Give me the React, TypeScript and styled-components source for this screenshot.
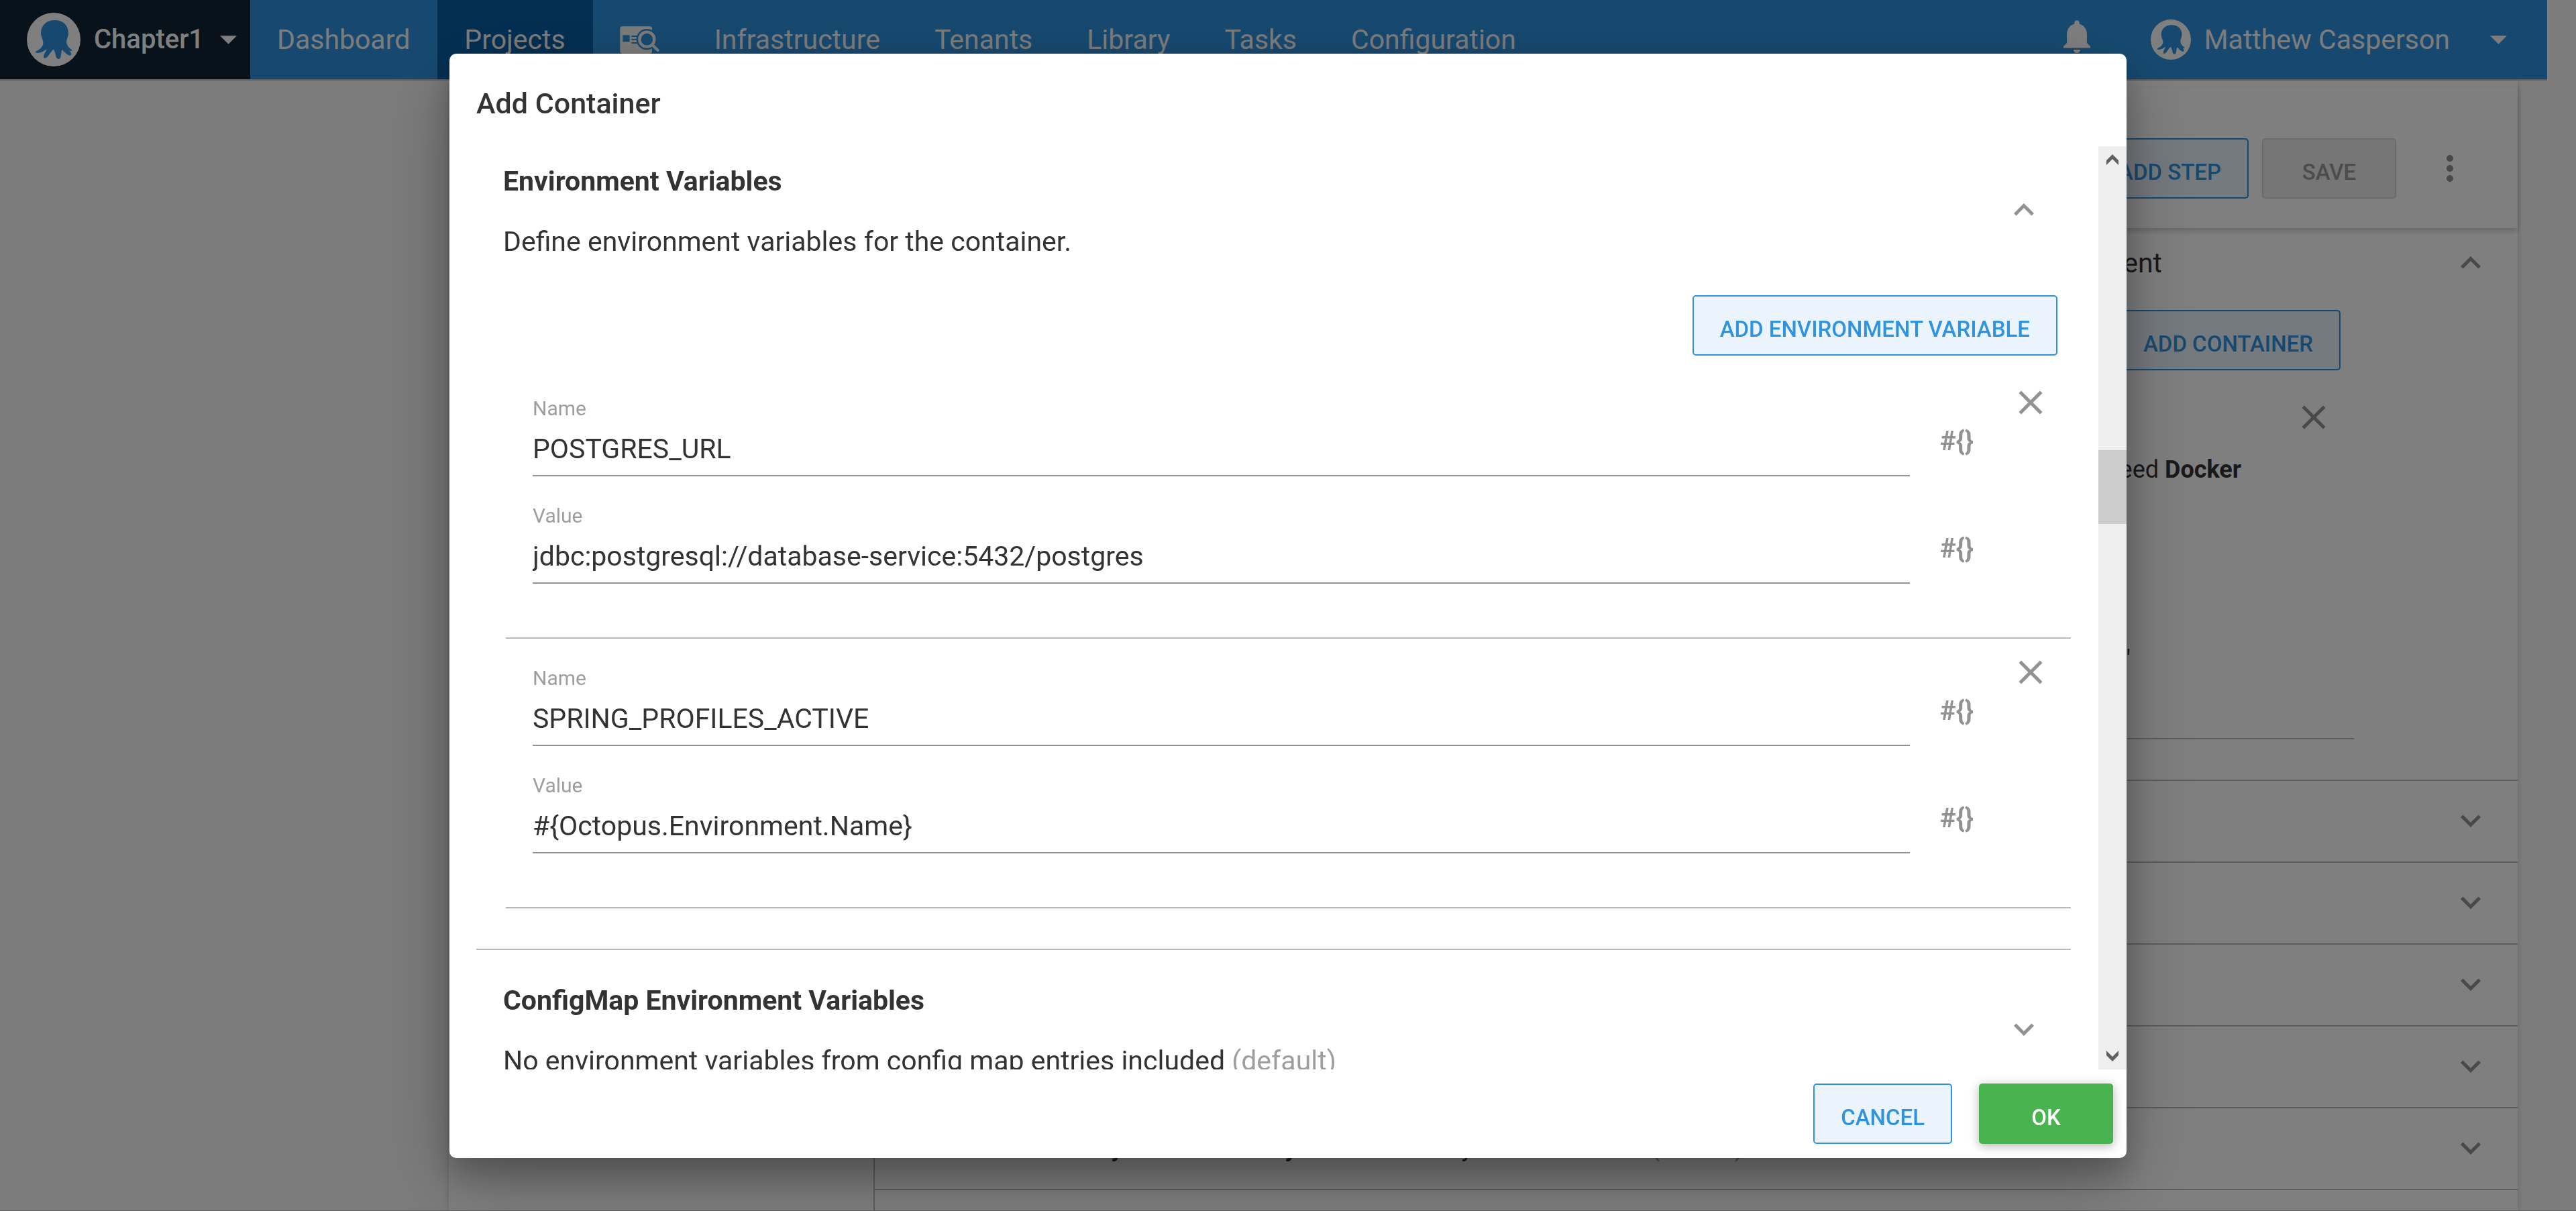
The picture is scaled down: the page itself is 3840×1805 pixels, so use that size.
import React, { useState } from "react";
import styled, { createGlobalStyle } from "styled-components";

const color = {
  brand: "#2f93e0",
  brandDark: "#085fa6",
  brandTint: "#ebf4fc",
  navy: "#0e2434",
  text: "#333333",
  muted: "#9e9e9e",
  icon: "#929292",
  line: "#bababa",
  page: "#f9f9f9",
  green: "#49b350",
};

const GlobalStyle = createGlobalStyle`
  *, *::before, *::after { box-sizing: border-box; }
  body {
    margin: 0;
    background: ${color.page};
    color: ${color.text};
    font-family: Roboto, "Liberation Sans", sans-serif;
    font-size: 41px;
    line-height: 60px;
  }
  button, input { font: inherit; color: inherit; }
  h1, h2, p { margin: 0; }
`;

const Page = styled.div`
  height: 100vh;
  overflow: hidden;
  display: flex;
  flex-direction: column;
  border-bottom: 1px solid ${color.line};
`;

/* ---------- navigation ---------- */

const NavBar = styled.header`
  flex: none;
  display: flex;
  align-items: stretch;
  height: 120px;
  margin-right: 43px;
  background: ${color.brand};
  border-bottom: 2px solid ${color.line};
  color: #f8f8f8;
`;

const SpaceButton = styled.button`
  display: flex;
  align-items: center;
  padding: 0 20px 0 40px;
  border: 0;
  background: ${color.navy};
  color: #ffffff;
  font-size: 40px;
  font-weight: 500;
`;

const SpaceName = styled.span`
  margin: 0 24px 0 20px;
`;

const NavLinks = styled.nav`
  display: flex;
`;

const NavLink = styled.a<{ $active?: boolean }>`
  display: flex;
  align-items: center;
  padding: 0 41px 0 40px;
  color: inherit;
  text-decoration: none;
  background: ${(p) => (p.$active ? color.brandDark : "transparent")};
`;

const NavEnd = styled.div`
  display: flex;
  align-items: center;
  margin-left: auto;
  padding-right: 60px;
  gap: 80px;
`;

const BareButton = styled.button`
  display: flex;
  align-items: center;
  justify-content: center;
  flex: none;
  padding: 0;
  border: 0;
  background: none;
`;

const BellButton = styled(BareButton)`
  width: 60px;
  padding-bottom: 10px;
`;

const UserName = styled.span`
  margin: 0 60px 0 20px;
`;

/* ---------- page behind the dialog ---------- */

const Paper = styled.main`
  flex: 1;
  min-height: 0;
  display: grid;
  grid-template-columns: 635px 1fr;
  margin: 0 87px 0 669px;
  background: #ffffff;
  box-shadow: 0 2px 8px rgba(0, 0, 0, 0.2);
`;

const StepList = styled.aside`
  border-right: 2px solid ${color.line};
  margin-top: 220px;
`;

const StepEditor = styled.section`
  display: flex;
  flex-direction: column;
`;

const Toolbar = styled.div`
  display: flex;
  align-items: center;
  justify-content: flex-end;
  gap: 20px;
  height: 210px;
  margin-top: 10px;
  padding: 32px 71px 0 0;
  box-shadow: 0 4px 8px rgba(0, 0, 0, 0.2);
`;

const MoreButton = styled(BareButton)`
  width: 60px;
  height: 60px;
  margin-left: 30px;
  color: ${color.icon};
`;

const Expander = styled.div`
  display: flex;
  flex-direction: column;
  padding: 22px 40px 60px;
  border-bottom: 2px solid ${color.line};
`;

const ExpanderHead = styled.div`
  display: flex;
  align-items: center;
  justify-content: flex-end;
  gap: 430px;
`;

const ContainerList = styled.div`
  display: flex;
  flex-direction: column;
  align-items: flex-end;
  gap: 40px;
  height: 680px;
  margin: 0 204px 0 0;
  padding: 40px 20px 0 0;
  border-bottom: 2px solid ${color.line};
`;

const ContainerCard = styled.div`
  display: flex;
  flex-direction: column;
  align-items: flex-end;
  padding-right: 10px;
  font-size: 36px;
  line-height: 40px;
`;

const ImageLine = styled.p`
  padding: 28px 138px 0 0;
`;

const LabelLine = styled.p`
  padding: 243px 303px 0 0;
`;

const CollapsedRow = styled.div`
  flex: none;
  display: flex;
  align-items: center;
  justify-content: space-between;
  height: 122px;
  padding: 0 40px 2px 352px;
  border-bottom: 2px solid ${color.line};
  font-size: 36px;
`;

const Muted = styled.span`
  color: ${color.muted};
`;

const Choice = styled.span`
  display: flex;
  gap: 10px;
`;

/* ---------- buttons ---------- */

const Button = styled.button<{ $kind?: "primary" }>`
  flex: none;
  height: 90px;
  min-width: 200px;
  padding: 11px 39px 0;
  border: 2px solid ${(p) => (p.$kind ? color.green : color.brand)};
  border-radius: 5px;
  background: ${(p) => (p.$kind ? color.green : color.brandTint)};
  color: ${(p) => (p.$kind ? "#ffffff" : color.brand)};
  box-shadow: ${(p) => (p.$kind ? "0 3px 15px rgba(0, 0, 0, 0.3)" : "none")};
  font-size: 33px;
  font-weight: 500;
  text-transform: uppercase;

  &:disabled {
    border-color: #d6d6d6;
    background: #ececec;
    color: #989898;
  }
`;

const IconButton = styled(BareButton)`
  width: 60px;
  height: 60px;
  color: ${color.icon};
`;

/* ---------- dialog ---------- */

const Backdrop = styled.div`
  position: fixed;
  inset: 0;
  display: flex;
  justify-content: center;
  padding: 80px 80px 79px;
  background: rgba(0, 0, 0, 0.5);
`;

const Dialog = styled.div`
  display: flex;
  flex-direction: column;
  width: 100%;
  max-width: 2500px;
  border-radius: 10px;
  background: #ffffff;
  box-shadow: 0 35px 112px rgba(0, 0, 0, 0.25), 0 25px 45px rgba(0, 0, 0, 0.22);
`;

const DialogTitle = styled.h1`
  padding: 44px 40px 34px;
  font-size: 43px;
  font-weight: 500;
`;

const DialogBody = styled.div`
  flex: 1;
  min-height: 0;
  display: flex;
  overflow: hidden;
`;

const Scroller = styled.div`
  flex: 1;
  overflow: hidden;
  padding: 0 41px 0 40px;
`;

const Section = styled.section`
  padding-top: 45px;
  border-top: 2px solid ${color.line};

  &:first-child {
    padding-top: 22px;
    border-top: 0;
  }
`;

const SectionHead = styled.div`
  display: flex;
  align-items: center;
  justify-content: space-between;
  padding: 0 40px;

  > button {
    padding-bottom: 5px;
  }
`;

const SectionTitle = styled.h2`
  margin-bottom: 30px;
  font-size: 41px;
  font-weight: 700;
`;

const AddRow = styled.div`
  display: flex;
  justify-content: flex-end;
  padding: 50px 20px 20px;
`;

const VariableList = styled.ul`
  margin: 0;
  padding: 0 0 60px 44px;
  list-style: none;
`;

const Variable = styled.li`
  display: flex;
  gap: 55px;
  padding: 0 30px 0 40px;
  border-bottom: 2px solid ${color.line};
`;

const Fields = styled.div`
  flex: 1;
  padding: 40px 0;
`;

const FieldRow = styled.div`
  display: flex;
  align-items: flex-end;
  gap: 45px;
  margin-bottom: 40px;
`;

const Field = styled.label`
  flex: 1;
  display: flex;
  flex-direction: column;
  color: ${color.muted};
  font-size: 30px;
  line-height: 38px;
`;

const TextInput = styled.input`
  height: 82px;
  padding: 2px 0 0;
  border: 0;
  border-bottom: 2px solid ${color.icon};
  outline: 0;
  background: none;
  color: ${color.text};
  font-size: 41px;
`;

const InsertButton = styled(BareButton)`
  width: 50px;
  margin-bottom: 32px;
  color: ${color.icon};
  font-size: 40px;
  font-weight: 700;
  line-height: 40px;
  white-space: nowrap;
`;

const RemoveButton = styled(IconButton)`
  margin-top: 20px;
`;

const Scrollbar = styled.div`
  flex: none;
  display: flex;
  flex-direction: column;
  width: 42px;
  background: #efefef;
`;

const ScrollArrow = styled(BareButton)`
  height: 40px;
  color: #606060;
`;

const ScrollGap = styled.div<{ $share: number }>`
  flex: ${(p) => p.$share};
`;

const ScrollThumb = styled.div`
  height: 110px;
  background: #cccccc;
`;

const DialogActions = styled.div`
  display: flex;
  justify-content: flex-end;
  gap: 40px;
  padding: 21px 20px;
`;

/* ---------- icons ---------- */

const Octopus = ({ size }: { size: number }) => (
  <svg width={size} height={size} viewBox="30 27 240 240" aria-hidden="true">
    <circle cx="150" cy="147" r="120" fill="#ffffff" />
    <path
      fill={color.brand}
      d="M155 60C193 60 216 84 216 117C216 135 205 147 208 163C211 178 224 190 232 193C234 199 226 199 219 196C227 203 231 212 227 217C217 222 200 206 188 192C183 200 184 224 178 232C172 236 162 233 160 222C158 208 155 199 149 191C139 196 128 222 116 229C104 234 103 222 108 212C112 204 118 196 120 190C108 197 92 208 77 207C68 206 66 203 72 199C88 191 103 178 103 162C103 146 93 136 93 117C93 84 117 60 155 60Z"
    />
  </svg>
);

const Caret = () => (
  <svg width="25" height="13" viewBox="7 10 10 5" fill="currentColor" aria-hidden="true">
    <path d="M7 10l5 5 5-5z" />
  </svg>
);

const SearchCard = () => (
  <svg width="60" height="41" viewBox="69 56 180 123" aria-hidden="true">
    <rect x="70" y="57" width="143" height="121" rx="10" fill="#f8f8f8" />
    <rect x="82" y="96" width="31" height="30" fill={color.brand} />
    <path d="M121 101h30M121 115h24M121 131h30" stroke={color.brand} strokeWidth="6" />
    <circle cx="190" cy="115" r="47" fill={color.brand} />
    <path d="M212 138l29 29" stroke={color.brand} strokeWidth="24" />
    <circle cx="190" cy="115" r="33" fill="none" stroke="#f8f8f8" strokeWidth="13" />
    <path d="M213 139l26 25" stroke="#f8f8f8" strokeWidth="13" strokeLinecap="round" />
  </svg>
);

const Bell = () => (
  <svg width="60" height="60" viewBox="0 0 24 24" fill="#ffffff" aria-hidden="true">
    <path d="M12 22c1.1 0 2-.9 2-2h-4c0 1.1.89 2 2 2zm6-6v-5c0-3.07-1.64-5.64-4.5-6.32V4c0-.83-.67-1.5-1.5-1.5s-1.5.67-1.5 1.5v.68C7.63 5.36 6 7.92 6 11v5l-2 2v1h16v-1l-2-2z" />
  </svg>
);

const paths = {
  up: "M12 8l-6 6 1.41 1.41L12 10.83l4.59 4.58L18 14z",
  down: "M16.59 8.59L12 13.17 7.41 8.59 6 10l6 6 6-6z",
  close:
    "M19 6.41L17.59 5 12 10.59 6.41 5 5 6.41 10.59 12 5 17.59 6.41 19 12 13.41 17.59 19 19 17.59 13.41 12z",
  more: "M12 8c1.1 0 2-.9 2-2s-.9-2-2-2-2 .9-2 2 .9 2 2 2zm0 2c-1.1 0-2 .9-2 2s.9 2 2 2 2-.9 2-2-.9-2-2-2zm0 6c-1.1 0-2 .9-2 2s.9 2 2 2 2-.9 2-2-.9-2-2-2z",
};

const Icon = ({ name }: { name: keyof typeof paths }) => (
  <svg width="60" height="60" viewBox="0 0 24 24" fill="currentColor" aria-hidden="true">
    <path d={paths[name]} />
  </svg>
);

const ArrowUp = () => (
  <svg width="18" height="16" viewBox="0 0 18 16" fill="currentColor" aria-hidden="true">
    <path d="M9 0l9 9v7l-9-9-9 9V9z" />
  </svg>
);

const ArrowDown = () => (
  <svg width="18" height="16" viewBox="0 0 18 16" fill="currentColor" aria-hidden="true">
    <path d="M9 16l9-9V0L9 9 0 0v7z" />
  </svg>
);

/* ---------- data ---------- */

const initialVariables = [
  { name: "POSTGRES_URL", value: "jdbc:postgresql://database-service:5432/postgres" },
  { name: "SPRING_PROFILES_ACTIVE", value: "#{Octopus.Environment.Name}" },
];

const collapsedSections = ["Volumes", "ConfigMap", "Secret", "Service"];

export default function App() {
  const [variables, setVariables] = useState(initialVariables);

  const update = (index: number, key: "name" | "value", text: string) =>
    setVariables((all) => all.map((v, i) => (i === index ? { ...v, [key]: text } : v)));

  return (
    <>
      <GlobalStyle />
      <Page>
        <NavBar>
          <SpaceButton>
            <Octopus size={80} />
            <SpaceName>Chapter1</SpaceName>
            <Caret />
          </SpaceButton>
          <NavLinks>
            <NavLink href="#dashboard">Dashboard</NavLink>
            <NavLink href="#projects" $active>
              Projects
            </NavLink>
            <NavLink href="#search" aria-label="Search projects">
              <SearchCard />
            </NavLink>
            <NavLink href="#infrastructure">Infrastructure</NavLink>
            <NavLink href="#tenants">Tenants</NavLink>
            <NavLink href="#library">Library</NavLink>
            <NavLink href="#tasks">Tasks</NavLink>
            <NavLink href="#configuration">Configuration</NavLink>
          </NavLinks>
          <NavEnd>
            <BellButton aria-label="Notifications">
              <Bell />
            </BellButton>
            <BareButton>
              <Octopus size={60} />
              <UserName>Matthew Casperson</UserName>
              <Caret />
            </BareButton>
          </NavEnd>
        </NavBar>

        <Paper>
          <StepList />
          <StepEditor>
            <Toolbar>
              <Button>Add step</Button>
              <Button disabled>Save</Button>
              <MoreButton aria-label="More actions">
                <Icon name="more" />
              </MoreButton>
            </Toolbar>
            <Expander>
              <ExpanderHead>
                <span>Deployment</span>
                <IconButton aria-label="Collapse">
                  <Icon name="up" />
                </IconButton>
              </ExpanderHead>
              <ContainerList>
                <Button>Add container</Button>
                <ContainerCard>
                  <IconButton aria-label="Remove container">
                    <Icon name="close" />
                  </IconButton>
                  <ImageLine>
                    from feed <b>Docker</b>
                  </ImageLine>
                  <LabelLine>"web"</LabelLine>
                </ContainerCard>
              </ContainerList>
            </Expander>
            {collapsedSections.map((title) => (
              <CollapsedRow key={title}>
                <span>{title}</span>
                <IconButton aria-label={"Expand " + title}>
                  <Icon name="down" />
                </IconButton>
              </CollapsedRow>
            ))}
            <CollapsedRow>
              <Choice>
                <b>y / Node Security</b>
                <span>No host identity values were set</span>
                <Muted>(default)</Muted>
              </Choice>
              <IconButton aria-label="Expand Node Security">
                <Icon name="down" />
              </IconButton>
            </CollapsedRow>
          </StepEditor>
        </Paper>
      </Page>

      <Backdrop>
        <Dialog role="dialog" aria-modal="true" aria-labelledby="dialog-title">
          <DialogTitle id="dialog-title">Add Container</DialogTitle>
          <DialogBody>
            <Scroller>
              <Section>
                <SectionHead>
                  <div>
                    <SectionTitle>Environment Variables</SectionTitle>
                    <p>Define environment variables for the container.</p>
                  </div>
                  <IconButton aria-label="Collapse Environment Variables">
                    <Icon name="up" />
                  </IconButton>
                </SectionHead>
                <AddRow>
                  <Button>Add environment variable</Button>
                </AddRow>
                <VariableList>
                  {variables.map((v, i) => (
                    <Variable key={i}>
                      <Fields>
                        <FieldRow>
                          <Field>
                            Name
                            <TextInput
                              value={v.name}
                              onChange={(e) => update(i, "name", e.target.value)}
                            />
                          </Field>
                          <InsertButton aria-label="Insert variable">{"#{}"}</InsertButton>
                        </FieldRow>
                        <FieldRow>
                          <Field>
                            Value
                            <TextInput
                              value={v.value}
                              onChange={(e) => update(i, "value", e.target.value)}
                            />
                          </Field>
                          <InsertButton aria-label="Insert variable">{"#{}"}</InsertButton>
                        </FieldRow>
                      </Fields>
                      <RemoveButton aria-label={"Remove " + v.name}>
                        <Icon name="close" />
                      </RemoveButton>
                    </Variable>
                  ))}
                </VariableList>
              </Section>
              <Section>
                <SectionHead>
                  <div>
                    <SectionTitle>ConfigMap Environment Variables</SectionTitle>
                    <p>
                      No environment variables from config map entries included{" "}
                      <Muted>(default)</Muted>
                    </p>
                  </div>
                  <IconButton aria-label="Expand ConfigMap Environment Variables">
                    <Icon name="down" />
                  </IconButton>
                </SectionHead>
              </Section>
            </Scroller>
            <Scrollbar>
              <ScrollArrow aria-label="Scroll up">
                <ArrowUp />
              </ScrollArrow>
              <ScrollGap $share={412} />
              <ScrollThumb />
              <ScrollGap $share={770} />
              <ScrollArrow aria-label="Scroll down">
                <ArrowDown />
              </ScrollArrow>
            </Scrollbar>
          </DialogBody>
          <DialogActions>
            <Button>Cancel</Button>
            <Button $kind="primary">OK</Button>
          </DialogActions>
        </Dialog>
      </Backdrop>
    </>
  );
}
